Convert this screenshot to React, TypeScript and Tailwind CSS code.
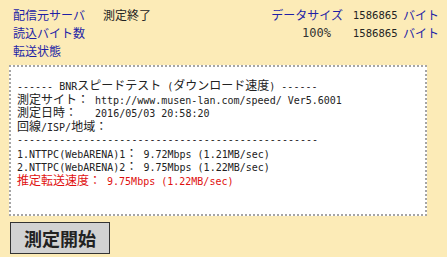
const BLUE = "text-[#1f1fa6]";

// CJK run inside the monospace result box: ascii is 6px wide, kana/kanji 12px
function J({ children }: { children: React.ReactNode }) {
  return <span className="font-['Noto_Sans_CJK_JP',sans-serif] text-[12px] leading-[12px]">{children}</span>;
}

function Line({ children, red }: { children: React.ReactNode; red?: boolean }) {
  return (
    <div className={`h-[13.5px] leading-[13.5px] whitespace-pre ${red ? "text-[#e01010]" : "text-[#222]"}`}>
      {children}
    </div>
  );
}

function Num({ children }: { children: React.ReactNode }) {
  return (
    <span className="w-[50px] font-['DejaVu_Sans',sans-serif] text-[10px] text-[#222]">{children}</span>
  );
}

export default function App() {
  return (
    <div className="w-[447px] h-[266px] bg-white font-['Noto_Sans_CJK_JP',sans-serif] text-[12px]">
      <div className="h-[257px] bg-[#fcebb7] flex flex-col">
        {/* status rows */}
        <div className="pl-[13px] pr-[8px] pt-[6px]">
          <div className="flex h-[18px] items-center">
            <span className={`w-[90px] ${BLUE}`}>配信元サーバ</span>
            <span className="text-[#222]">測定終了</span>
            <div className="ml-auto flex items-center">
              <span className={`w-[84px] text-right ${BLUE}`}>データサイズ</span>
              <span className="w-[10px]" />
              <Num>1586865</Num>
              <span className={BLUE}>バイト</span>
            </div>
          </div>
          <div className="flex h-[18px] items-center">
            <span className={`w-[90px] ${BLUE}`}>読込バイト数</span>
            <div className="ml-auto flex items-center">
              <span className="w-[84px] pr-[12px] text-right font-['DejaVu_Sans_Mono',monospace] text-[12px] text-[#333]">
                100%
              </span>
              <span className="w-[10px]" />
              <Num>1586865</Num>
              <span className={BLUE}>バイト</span>
            </div>
          </div>
          <div className="flex h-[18px] items-center">
            <span className={`w-[90px] ${BLUE}`}>転送状態</span>
          </div>
        </div>

        {/* result box */}
        <div className="ml-[9px] mt-[5px] w-[418px] h-[151px] bg-white border-2 border-dotted border-[#a5a5a5] pl-[6px] pt-[12px] font-['DejaVu_Sans_Mono',monospace] text-[10px]">
          <Line>
            ------ BNR<J>スピードテスト</J> (<J>ダウンロード速度</J>) ------
          </Line>
          <Line>
            <J>測定サイト：</J> http://www.musen-lan.com/speed/ Ver5.6001
          </Line>
          <Line>
            <J>測定日時：</J>   2016/05/03 20:58:20
          </Line>
          <Line>
            <J>回線</J>/ISP/<J>地域：</J>
          </Line>
          <Line>--------------------------------------------------</Line>
          <Line>
            1.NTTPC(WebARENA)1<J>：</J> 9.72Mbps (1.21MB/sec)
          </Line>
          <Line>
            2.NTTPC(WebARENA)2<J>：</J> 9.75Mbps (1.22MB/sec)
          </Line>
          <Line red>
            <J>推定転送速度：</J> 9.75Mbps (1.22MB/sec)
          </Line>
        </div>

        <div className="pl-[10px] mt-[6px]">
          <button className="w-[100px] h-[32px] bg-[#d2d2d2] border border-[#333] text-[18px] font-bold text-[#222] leading-none">
            測定開始
          </button>
        </div>
      </div>
    </div>
  );
}
